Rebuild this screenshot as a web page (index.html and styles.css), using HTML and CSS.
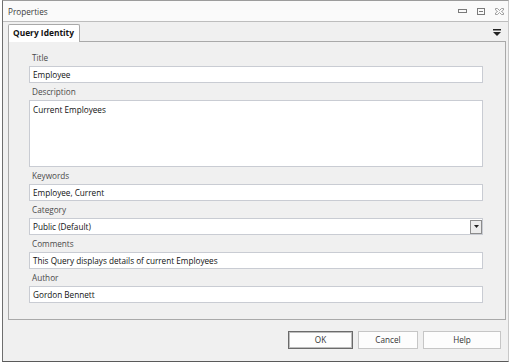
FILE: index.html
```html
<!DOCTYPE html>
<html>
<head>
<meta charset="utf-8">
<link rel="stylesheet" href="styles.css">
</head>
<body>
<div class="window">
  <div class="titlebar">
    <span class="title">Properties</span>
    <div class="controls">
      <svg class="ctl" width="9" height="5" viewBox="0 0 9 5"><rect x="0.5" y="0.5" width="8" height="3" fill="none" stroke="#7a7a7a"/></svg>
      <svg class="ctl" width="8" height="7" viewBox="0 0 8 7"><rect x="0.5" y="0.5" width="7" height="6" fill="none" stroke="#7a7a7a"/><line x1="2" y1="3.5" x2="6" y2="3.5" stroke="#7a7a7a"/></svg>
      <svg class="ctl" width="9" height="7" viewBox="0 0 9 7"><path d="M0.5 0.5h2l2 2 2-2h2v1.5l-2 1.5 2 1.5v1.5h-2l-2-2-2 2h-2v-1.5l2-1.5-2-1.5z" fill="none" stroke="#8a8a8a" stroke-width="0.8"/></svg>
    </div>
  </div>
  <div class="tabstrip">
    <div class="tab">Query Identity</div>
    <svg class="menu" width="8" height="7" viewBox="0 0 8 7"><rect x="0" y="0" width="8" height="1.5" fill="#222"/><path d="M0 3h8l-4 4z" fill="#222"/></svg>
  </div>
  <div class="panel">
    <div class="label">Title</div>
    <div class="field">Employee</div>
    <div class="label">Description</div>
    <div class="field area">Current Employees</div>
    <div class="label">Keywords</div>
    <div class="field">Employee, Current</div>
    <div class="label">Category</div>
    <div class="field select"><span>Public (Default)</span><span class="drop"><svg width="5" height="3" viewBox="0 0 5 3"><path d="M0 0h5l-2.5 3z" fill="#222"/></svg></span></div>
    <div class="label">Comments</div>
    <div class="field">This Query displays details of current Employees</div>
    <div class="label">Author</div>
    <div class="field">Gordon Bennett</div>
  </div>
  <div class="buttons">
    <div class="btn default">OK</div>
    <div class="btn cancel">Cancel</div>
    <div class="btn help">Help</div>
  </div>
</div>
</body>
</html>
```
FILE: styles.css
```css
html, body {
  margin: 0;
  padding: 0;
  background: #ffffff;
}
body {
  width: 510px;
  height: 363px;
  font-family: "Open Sans", "Noto Sans", sans-serif;
  font-size: 8.2px;
  color: #111;
}
.window {
  box-sizing: border-box;
  margin-left: 2px;
  width: 507px;
  height: 362px;
  border-top: 1px solid #9c9c9c;
  border-left: 1px solid #6e6e6e;
  border-right: 1px solid #c8c8c8;
  border-bottom: 1px solid #5a5a5a;
  background: #f0f0f0;
  display: flex;
  flex-direction: column;
}
.titlebar {
  height: 20px;
  background: #fafafa;
  border-bottom: 1px solid #bdbdbd;
  display: flex;
  align-items: center;
  padding-left: 5px;
}
.title {
  color: #3a3a3a;
}
.controls {
  margin-left: auto;
  margin-right: 4px;
  display: flex;
  align-items: center;
  gap: 10px;
}
.tabstrip {
  height: 19px;
  display: flex;
  align-items: flex-end;
  padding-left: 5px;
  background: #f0f0f0;
}
.tab {
  position: relative;
  z-index: 1;
  box-sizing: border-box;
  height: 18px;
  width: 72px;
  margin-bottom: -1px;
  padding-left: 4px;
  line-height: 16px;
  font-size: 8.4px;
  font-weight: 700;
  color: #111;
  background: #ffffff;
  border: 1px solid #a9a9a9;
  border-bottom: none;
  border-radius: 2px 2px 0 0;
}
.menu {
  margin-left: auto;
  margin-right: 7px;
  align-self: center;
  margin-top: 2px;
}
.panel {
  margin: 0 2px 0 5px;
  border: 1px solid #a9a9a9;
  background: #f0f0f0;
  padding: 7px 22px 16px 20px;
  display: flex;
  flex-direction: column;
}
.label {
  height: 17px;
  line-height: 17px;
  padding-left: 3px;
  color: #4a4a4a;
}
.field {
  box-sizing: border-box;
  height: 17px;
  line-height: 15px;
  padding-left: 3px;
  background: #ffffff;
  border: 1px solid #c9ccd3;
  color: #111;
  display: flex;
  align-items: center;
}
.field.area {
  height: 67px;
  align-items: flex-start;
  padding: 1px 3px;
}
.field.select span:first-child {
  flex: 1;
}
.drop {
  box-sizing: border-box;
  width: 12px;
  height: 14px;
  border: 1px solid #8c8c8c;
  background: #ececec;
  display: flex;
  align-items: center;
  justify-content: center;
}
.buttons {
  flex: 1;
  display: flex;
  justify-content: flex-end;
  align-items: flex-start;
  padding-top: 11px;
  padding-right: 7px;
  gap: 5px;
}
.btn {
  box-sizing: border-box;
  height: 18px;
  line-height: 16px;
  text-align: center;
  color: #333;
  background: #fdfdfd;
  border: 1px solid #c6c6c6;
}
.btn.default {
  width: 65px;
  border: 1px solid #6a6a6a;
  box-shadow: inset 0 0 0 1px #bdbdbd;
}
.btn.cancel {
  width: 60px;
}
.btn.help {
  width: 78px;
}
```
